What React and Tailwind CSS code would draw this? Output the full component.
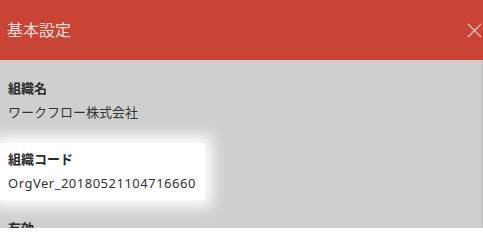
import React from "react";

export default function App() {
  const font = { fontFamily: '"Noto Sans", "Noto Sans CJK JP", sans-serif' };
  return (
    <div className="w-[483px] h-[228px] overflow-hidden bg-[#cfcfcf] flex flex-col" style={font}>
      <div className="h-[60px] shrink-0 bg-[#c94435] flex items-center justify-between pl-[7px] pr-[1px]">
        <span className="text-[16px] leading-[20px] text-[#f3dcd8]">基本設定</span>
        <svg width="15" height="15" viewBox="0 0 15 15" className="mt-[1px]">
          <path d="M1 1 L14 14 M14 1 L1 14" stroke="#ecc5bf" strokeWidth="1.2" fill="none" />
        </svg>
      </div>
      <div className="flex flex-1 min-h-0">
        <div className="flex-1 flex flex-col pt-[8px] overflow-hidden">
          <div className="h-[75px] shrink-0 pt-[10px] pl-[8px] flex flex-col">
            <div className="text-[13px] leading-[20px] font-bold text-[#2b2b2b]">組織名</div>
            <div className="mt-[2px] text-[13px] leading-[24px] text-[#333333]">ワークフロー株式会社</div>
          </div>
          <div className="h-[57px] w-[205px] shrink-0 bg-white shadow-[0_0_14px_7px_#ffffff] pt-[6px] pl-[8px] flex flex-col">
            <div className="text-[13px] leading-[20px] font-bold text-[#2b2b2b]">組織コード</div>
            <div className="mt-[2px] text-[13px] leading-[24px] tracking-[0.5px] text-[#333333] whitespace-nowrap">OrgVer_20180521104716660</div>
          </div>
          <div className="shrink-0 pt-[18px] pl-[8px]">
            <div className="text-[13px] leading-[20px] font-bold text-[#2b2b2b]">有効</div>
          </div>
        </div>
        <div className="w-[2px] bg-[#c3c3c3]" />
      </div>
    </div>
  );
}
